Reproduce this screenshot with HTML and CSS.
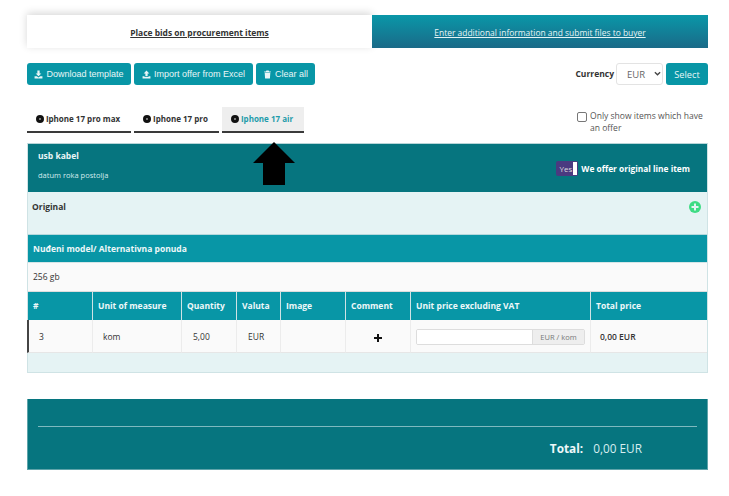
FILE: index.html
```html
<!DOCTYPE html>
<html lang="en">
<head>
<meta charset="utf-8">
<title>Place bids</title>
<link rel="stylesheet" href="styles.css">
</head>
<body>
<main class="page">
  <nav class="steps">
    <a class="step step-active">Place bids on procurement items</a>
    <a class="step step-next">Enter additional information and submit files to buyer</a>
  </nav>

  <section class="toolbar">
    <div class="btn-group">
      <button class="btn"><svg class="ico" viewBox="0 0 16 16"><path d="M6 1h4v5h3L8 11 3 6h3zM1 11h4l3 2.500 3-2.500h4v4H1z"/></svg>Download template</button>
      <button class="btn btn-import"><svg class="ico" viewBox="0 0 16 16"><path d="M8 1l5 5h-3v5H6V6H3zM1 11h3.500v1.500h7V11H15v4H1z"/></svg>Import offer from Excel</button>
      <button class="btn btn-clear"><svg class="ico" viewBox="0 0 16 16"><path d="M6 1h4l1 1.500h3v1.500H2V2.500h3zM3 5h10l-.7 10H3.700z"/></svg>Clear all</button>
    </div>
    <div class="currency">
      <label class="currency-label">Currency</label>
      <span class="select-wrap">
        <select class="currency-select"><option>EUR</option></select>
        <svg class="chevron" viewBox="0 0 8 5"><path d="M1 1l3 3 3-3"/></svg>
      </span>
      <button class="btn btn-select">Select</button>
    </div>
  </section>

  <section class="items">
    <div class="item-tabs">
      <a class="item-tab item-tab-1"><span class="dot"></span>Iphone 17 pro max</a>
      <a class="item-tab item-tab-2"><span class="dot"></span>Iphone 17 pro</a>
      <a class="item-tab item-tab-3 item-tab-active"><span class="dot"></span>Iphone 17 air</a>
    </div>
    <label class="only-offers"><input type="checkbox"><span>Only show items which have an offer</span></label>
  </section>

  <section class="panel">
    <header class="panel-head">
      <div>
        <div class="panel-title">usb kabel</div>
        <div class="panel-sub">datum roka postolja</div>
      </div>
      <div class="offer-toggle"><span class="switch"><span>Yes</span><i class="knob"></i></span><strong>We offer original line item</strong></div>
    </header>
    <div class="original">
      <strong>Original</strong>
      <svg class="plus-circle" viewBox="0 0 12 12"><circle cx="6" cy="6" r="6"/><path d="M5 2.500h2V5h2.500v2H7v2.500H5V7H2.500V5H5z"/></svg>
    </div>
    <div class="alt-head">Nuđeni model/ Alternativna ponuda</div>
    <div class="alt-value">256 gb</div>
    <table class="offer-table">
      <colgroup>
        <col class="c-num"><col class="c-unit"><col class="c-qty"><col class="c-cur"><col class="c-img"><col class="c-com"><col class="c-price"><col class="c-total">
      </colgroup>
      <thead>
        <tr><th>#</th><th>Unit of measure</th><th>Quantity</th><th>Valuta</th><th>Image</th><th>Comment</th><th>Unit price excluding VAT</th><th>Total price</th></tr>
      </thead>
      <tbody>
        <tr>
          <td class="first">3</td><td class="pad">kom</td><td class="pad-wide">5,00</td><td class="pad-wide">EUR</td><td></td>
          <td class="center"><svg class="plus" viewBox="0 0 8 8"><path d="M3 0h2v3h3v2H5v3H3V5H0V3h3z"/></svg></td>
          <td><div class="price-input"><span class="price-field"></span><span class="price-unit">EUR / kom</span></div></td>
          <td class="total-cell">0,00 EUR</td>
        </tr>
      </tbody>
    </table>
    <div class="panel-foot"></div>
  </section>

  <section class="summary">
    <hr class="summary-line">
    <div class="summary-total"><strong>Total:</strong><span>0,00 EUR</span></div>
  </section>

  <svg class="arrow" viewBox="0 0 42 43"><path d="M21 0l21 21H32v22H10V21H0z"/></svg>
</main>
</body>
</html>
```
FILE: styles.css
```css
* { box-sizing: border-box; }
html, body { margin: 0; background: #fff; }
body { font-family: "Open Sans", "Noto Sans", sans-serif; color: #333; font-size: 9px; }
.page { position: relative; width: 729px; height: 496px; padding: 15px 21px 0 27px; }

.steps { display: flex; height: 33px; }
.step { display: flex; align-items: center; justify-content: center; padding-top: 1px; text-decoration: underline; font-size: 8.45px; }
.step-active { width: 345px; background: #fff; font-weight: 700; color: #333; box-shadow: 0 -2px 8px rgba(0,0,0,.16); }
.step-next { flex: 1; color: #e6f5f6; background: linear-gradient(#0a97a8, #1a6a88); }

.toolbar { display: flex; justify-content: space-between; margin-top: 15px; height: 22px; }
.btn-group { display: flex; gap: 3px; }
.btn { display: flex; align-items: center; justify-content: center; height: 22px; border: 0; border-radius: 3px; padding: 0; background: #0896a6; color: #e8f6f7; font-family: "Liberation Sans", Arial, sans-serif; font-size: 9px; width: 104px; }
.btn-import { width: 119px; }
.btn-clear { width: 59px; }
.btn-select { width: 42px; font-family: "Open Sans", sans-serif; font-size: 9.2px; }
.ico { width: 9px; height: 9px; fill: #e8f6f7; margin-right: 3px; }
.currency { display: flex; align-items: center; }
.currency-label { font-weight: 700; font-size: 8.5px; margin: -2px 2px 0 0; }
.select-wrap { position: relative; display: block; width: 47px; height: 22px; margin-right: 3px; }
.currency-select { appearance: none; display: block; width: 47px; height: 22px; border: 1px solid #e3e3e3; border-radius: 3px; background: #fff; color: #666; font-family: "Open Sans", sans-serif; font-size: 9.5px; padding: 0 0 0 10px; }
.chevron { position: absolute; right: 2px; top: 8px; width: 7px; height: 5px; fill: none; stroke: #444; stroke-width: 1.5; }

.items { display: flex; justify-content: space-between; margin-top: 22px; height: 36px; }
.item-tabs { display: flex; height: 26px; gap: 3px; }
.item-tab { display: flex; align-items: center; justify-content: center; padding: 0 2px 1px 0; border-bottom: 2px solid #3a3a3a; font-weight: 700; font-size: 8px; color: #333; }
.item-tab-1 { width: 104px; }
.item-tab-2 { width: 85px; }
.item-tab-3 { width: 82px; }
.item-tab-active { background: #eee; color: #1f9cab; }
.dot { width: 8px; height: 8px; margin-right: 2px; border-radius: 50%; border: 3px solid #111; background: #999; }
.only-offers { display: flex; width: 131px; font-size: 8.55px; line-height: 11.5px; color: #555; padding-top: 4px; }
.only-offers input { appearance: none; width: 10px; height: 10px; margin: 1px 3px 0 0; flex: none; border: 1px solid #777; border-radius: 2px; background: #fff; }

.panel { border: 1px solid #cfe3e5; border-top-color: #b7d5d8; background: #e5f3f4; }
.panel-head { height: 48px; display: flex; justify-content: space-between; background: #06757f; color: #eaf6f7; }
.panel-title { font-weight: 700; font-size: 8.5px; margin: 6px 0 0 10px; }
.panel-sub { font-size: 7.5px; margin: 9px 0 0 10px; color: #d3ebed; }
.offer-toggle { display: flex; align-items: center; gap: 3px; margin: 0 17px 0 0; font-size: 8.35px; color: #fff; }
.switch { display: flex; align-items: center; justify-content: flex-end; height: 15px; width: 22px; padding-right: 1px; background: #4a3a80; border-radius: 2px; font-size: 8px; color: #ddd; }
.knob { width: 4px; height: 13px; margin-left: 1px; background: #fff; }
.original { height: 43px; display: flex; justify-content: space-between; padding: 9px 6px 0 4px; font-size: 8.5px; border-bottom: 1px solid #b5d8dc; }
.plus-circle { width: 12px; height: 12px; fill: #3edc84; }
.plus-circle path { fill: #e5f3f4; }
.alt-head { height: 27px; display: flex; align-items: center; padding-left: 5px; background: #0896a6; color: #eef8f9; font-weight: 700; font-size: 8.5px; }
.alt-value { height: 30px; display: flex; align-items: center; padding: 0 0 1px 5px; background: #fafafa; font-size: 8.5px; border-top: 1px solid #d5e5e7; border-bottom: 1px solid #ddd; }

.offer-table { width: calc(100% + 1px); margin-left: -1px; table-layout: fixed; border-collapse: separate; border-spacing: 0; font-size: 8.5px; }
.c-num { width: 65px; } .c-unit { width: 89px; } .c-qty { width: 55px; } .c-cur { width: 44px; }
.c-img { width: 65px; } .c-com { width: 65px; } .c-price { width: 180px; }
.offer-table th { height: 28px; padding: 0 5px 1px; background: #0896a6; color: #eef8f9; text-align: left; font-size: 8.5px; border-left: 1px solid #cfe3e5; }
.offer-table td { height: 33px; padding: 1px 5px 0; background: #fafafa; border-left: 1px solid #ececec; border-bottom: 1px solid #e6e6e6; }
.offer-table td.first { border-left: 2px solid #444; padding-left: 10px; }
.offer-table td.pad { padding-left: 10px; }
.offer-table td.pad-wide { padding-left: 11px; }
.offer-table td.total-cell { font-weight: 600; padding-left: 9px; }
.center { text-align: center; }
.plus { width: 8px; height: 8px; fill: #111; display: block; margin: 2px auto 0; }
.price-input { display: flex; height: 16px; border: 1px solid #ddd; border-radius: 2px; overflow: hidden; }
.price-field { flex: 1; background: #fff; }
.price-unit { width: 52px; display: flex; align-items: center; justify-content: center; background: #eee; color: #777; font-size: 7.5px; border-left: 1px solid #ddd; }
.panel-foot { height: 19px; }

.summary { margin-top: 26px; height: 71px; background: #06757f; padding: 0 10px; border: 1px solid #5ea4aa; border-top: 0; }
.summary-line { margin: 0; border: 0; height: 1px; background: #7eb9bf; position: relative; top: 27px; }
.summary-total { display: flex; justify-content: flex-end; align-items: center; gap: 10px; margin-top: 40px; padding-right: 55px; color: #d8eef0; font-size: 11.8px; }
.summary-total strong { color: #eef8f9; }

.arrow { position: absolute; left: 253px; top: 142px; width: 42px; height: 43px; fill: #000; }
```
